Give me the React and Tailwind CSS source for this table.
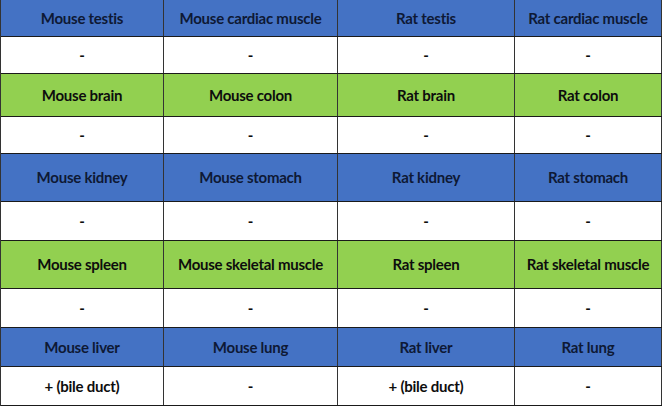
import React from "react";

const rows = [
  { type: "blue", h: "h-[37px]", cells: ["Mouse testis", "Mouse cardiac muscle", "Rat testis", "Rat cardiac muscle"] },
  { type: "white", h: "h-[37px]", cells: ["-", "-", "-", "-"] },
  { type: "green", h: "h-[43px]", cells: ["Mouse brain", "Mouse colon", "Rat brain", "Rat colon"] },
  { type: "white", h: "h-[37px]", cells: ["-", "-", "-", "-"] },
  { type: "blue", h: "h-[48px]", cells: ["Mouse kidney", "Mouse stomach", "Rat kidney", "Rat stomach"] },
  { type: "white", h: "h-[39px]", cells: ["-", "-", "-", "-"] },
  { type: "green", h: "h-[48px]", cells: ["Mouse spleen", "Mouse skeletal muscle", "Rat spleen", "Rat skeletal muscle"] },
  { type: "white", h: "h-[39px]", cells: ["-", "-", "-", "-"] },
  { type: "blue", h: "h-[39px]", cells: ["Mouse liver", "Mouse lung", "Rat liver", "Rat lung"] },
  { type: "white", h: "h-[39px]", cells: ["+ (bile duct)", "-", "+ (bile duct)", "-"] },
];

const bg = {
  blue: "bg-[#4472c4] text-[#0e1935]",
  green: "bg-[#92d050] text-[#0d0d0d]",
  white: "bg-white text-[#0d0d0d]",
};

export default function App() {
  return (
    <div className="w-[662px] h-[407px] bg-white" style={{ fontFamily: "Lato, 'Open Sans', sans-serif" }}>
      <div className="w-[662px] border-l border-[#333]">
        {rows.map((r, i) => (
          <div
            key={i}
            className={`grid grid-cols-[163px_174px_177px_147px] border-b border-[#1a1a1a] ${r.h} ${bg[r.type]}`}
          >
            {r.cells.map((c, j) => (
              <div
                key={j}
                className="flex items-center justify-center border-r border-[#333] text-[15px] font-bold tracking-[-0.25px]"
              >
                {c}
              </div>
            ))}
          </div>
        ))}
      </div>
    </div>
  );
}
